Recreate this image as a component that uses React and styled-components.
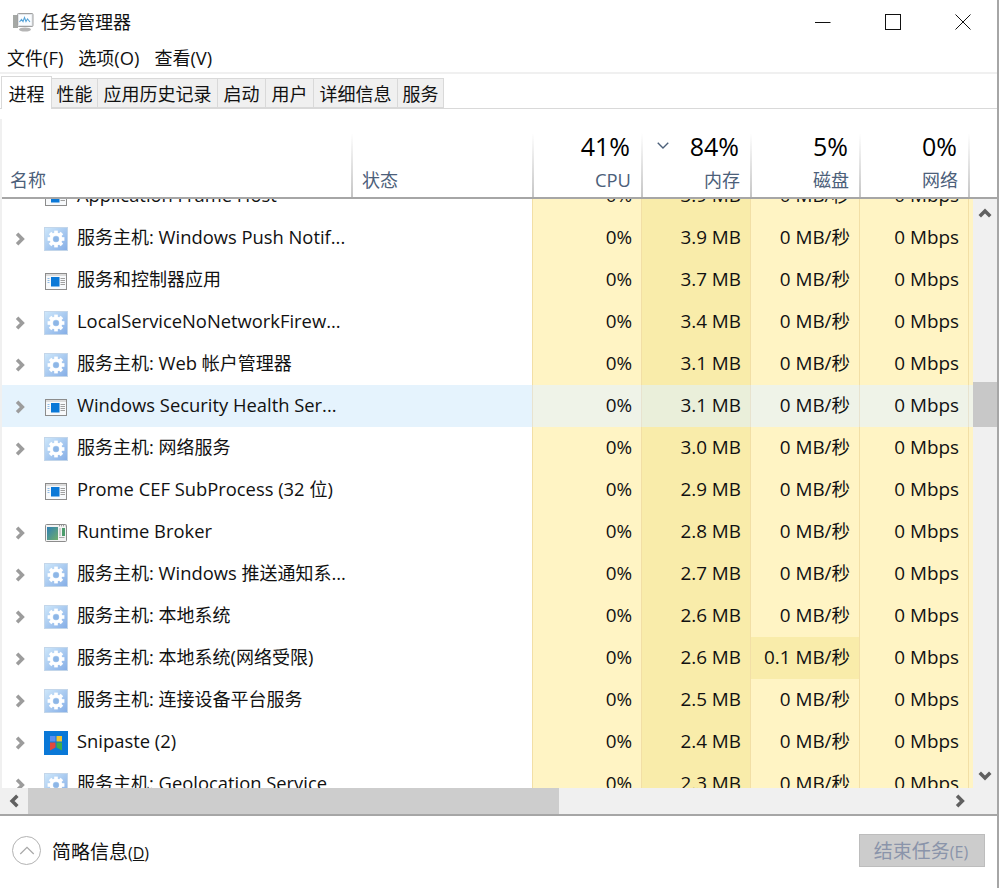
import React from "react";
import styled, { createGlobalStyle } from "styled-components";

const GlobalStyle = createGlobalStyle`
  html, body {
    margin: 0;
    padding: 0;
    background: #fff;
  }
  body {
    font-family: "Open Sans", "Noto Sans CJK SC", sans-serif;
    font-size: 18px;
    line-height: 24px;
    color: #1a1a1a;
  }
  * {
    box-sizing: border-box;
  }
`;

const rows = [
  { name: "Application Frame Host", icon: "app", mem: "3.9 MB" },
  { name: "服务主机: Windows Push Notif...", icon: "gear", open: true, mem: "3.9 MB" },
  { name: "服务和控制器应用", icon: "app", mem: "3.7 MB" },
  { name: "LocalServiceNoNetworkFirew...", icon: "gear", open: true, mem: "3.4 MB" },
  { name: "服务主机: Web 帐户管理器", icon: "gear", open: true, mem: "3.1 MB" },
  { name: "Windows Security Health Ser...", icon: "app", open: true, mem: "3.1 MB", hover: true },
  { name: "服务主机: 网络服务", icon: "gear", open: true, mem: "3.0 MB" },
  { name: "Prome CEF SubProcess (32 位)", icon: "app", mem: "2.9 MB" },
  { name: "Runtime Broker", icon: "broker", open: true, mem: "2.8 MB" },
  { name: "服务主机: Windows 推送通知系...", icon: "gear", open: true, mem: "2.7 MB" },
  { name: "服务主机: 本地系统", icon: "gear", open: true, mem: "2.6 MB" },
  { name: "服务主机: 本地系统(网络受限)", icon: "gear", open: true, mem: "2.6 MB", disk: "0.1 MB/秒" },
  { name: "服务主机: 连接设备平台服务", icon: "gear", open: true, mem: "2.5 MB" },
  { name: "Snipaste (2)", icon: "snipaste", open: true, mem: "2.4 MB" },
  { name: "服务主机: Geolocation Service", icon: "gear", open: true, mem: "2.3 MB" },
];

const tabs = ["进程", "性能", "应用历史记录", "启动", "用户", "详细信息", "服务"];
const tabWidths = [51, 46, 120, 48, 48, 84, 46];

const columns = "351px 179px 109px 109px 109px 109px 5px";

function GearIcon() {
  const teeth = [0, 45, 90, 135, 180, 225, 270, 315];
  return (
    <svg width="24" height="24" viewBox="0 0 24 24">
      <defs>
        <linearGradient id="gearBg" x1="0" y1="0" x2="1" y2="1">
          <stop offset="0" stopColor="#cfe8fb" />
          <stop offset="1" stopColor="#84ade6" />
        </linearGradient>
      </defs>
      <rect x="0.5" y="0.5" width="23" height="23" fill="url(#gearBg)" stroke="#c3d6ea" />
      {teeth.map((a) => (
        <rect key={a} x="10.2" y="3.6" width="3.6" height="4.4" fill="#fff" transform={`rotate(${a} 12 12)`} />
      ))}
      <circle cx="12" cy="12" r="4.8" fill="none" stroke="#fff" strokeWidth="3.2" />
      <circle cx="12" cy="12" r="2.6" fill="#8db6e6" />
    </svg>
  );
}

function AppIcon() {
  return (
    <svg width="24" height="24" viewBox="0 0 24 24">
      <rect x="1.5" y="4.5" width="21" height="16" fill="#f7f9fb" stroke="#8c8c8c" />
      <rect x="2" y="5" width="20" height="2" fill="#dcdcdc" />
      <rect x="7" y="8" width="8.500" height="9.500" fill="#0a78d7" />
      <path d="M3.500 9.500h2M3.500 11.500h2M3.500 13.500h2" stroke="#8fbce6" />
      <path d="M16.500 9.500h4.500M16.500 11.500h4.500M16.500 13.500h4.500M16.500 15.500h4.500" stroke="#a0a0a0" />
    </svg>
  );
}

function BrokerIcon() {
  return (
    <svg width="24" height="24" viewBox="0 0 24 24">
      <defs>
        <linearGradient id="brokerBg" x1="0" y1="0" x2="1" y2="1">
          <stop offset="0" stopColor="#2f7fb5" />
          <stop offset="1" stopColor="#6fae6a" />
        </linearGradient>
      </defs>
      <rect x="1.5" y="3.5" width="21" height="17" rx="1" fill="#f3f3f3" stroke="#8c8c8c" />
      <rect x="3" y="6" width="11" height="13" fill="url(#brokerBg)" />
      <rect x="18" y="7" width="3" height="8" fill="#4c9c6c" />
      <path d="M15 8h2M15 10h2M15 12h2M15 14h2M15 16.500h5.500" stroke="#a8a8a8" />
      <path d="M15 4.800h1M17 4.800h1M19 4.800h1M21 4.800h0.500" stroke="#777" />
    </svg>
  );
}

function SnipasteIcon() {
  return (
    <svg width="24" height="24" viewBox="0 0 24 24">
      <rect width="24" height="24" fill="#0a78d7" />
      <rect x="6" y="5" width="5.500" height="5.500" fill="#5b8ff2" />
      <rect x="12.500" y="5" width="5.500" height="5.500" fill="#f4c430" />
      <path d="M6 11.500h5.500v5L6 19.500z" fill="#e2483d" />
      <path d="M12.500 11.500H18v8l-5.500-3z" fill="#3fae49" />
    </svg>
  );
}

const rowIcons = {
  gear: GearIcon,
  app: AppIcon,
  broker: BrokerIcon,
  snipaste: SnipasteIcon,
};

function Chevron({ dir = "right", size = 14, color = "#9c9c9c", width = 3 }) {
  const paths = {
    right: "M3.500 1.500 L8 6 L3.500 10.500",
    left: "M8 1.500 L3.500 6 L8 10.500",
    up: "M1.500 8 L6 3.500 L10.500 8",
    down: "M1.500 4 L6 8.500 L10.500 4",
  };
  return (
    <svg width={size} height={size} viewBox="0 0 12 12">
      <path d={paths[dir]} fill="none" stroke={color} strokeWidth={width} />
    </svg>
  );
}

// the reference's Latin glyphs run a little wider than Open Sans next to 18px CJK
const Latin = styled.span`
  font-size: 1.02em;
`;

function Mixed({ text }) {
  return text
    .split(/([\x00-\x7f]+)/)
    .map((part, i) => (/^[\x00-\x7f]+$/.test(part) ? <Latin key={i}>{part}</Latin> : part));
}

const Window = styled.div`
  width: 999px;
  height: 888px;
  display: flex;
  flex-direction: column;
  background: #fff;
  border-right: 2px solid #a6a6a6;
  overflow: hidden;
`;

const TitleBar = styled.div`
  height: 44px;
  flex: none;
  display: flex;
  align-items: center;
  padding-left: 12px;
`;

const AppTitle = styled.span`
  margin-left: 7px;
  padding-bottom: 1px;
  color: #111;
`;

const WindowControls = styled.div`
  margin-left: auto;
  display: flex;
  align-items: center;
  gap: 54px;
  padding-right: 26px;
`;

const MenuBar = styled.div`
  height: 30px;
  flex: none;
  display: flex;
  align-items: center;
  gap: 15px;
  padding-left: 7px;
  border-bottom: 2px solid #f0f0f0;
`;

const MenuItem = styled.span`
  color: #111;
`;

const TabStrip = styled.div`
  height: 35px;
  flex: none;
  display: flex;
  align-items: flex-end;
  padding-left: 1px;
  border-bottom: 1px solid #d9d9d9;
`;

const Tab = styled.div`
  width: ${(p) => p.$width}px;
  height: ${(p) => (p.$active ? 33 : 30)}px;
  margin-bottom: ${(p) => (p.$active ? -1 : 0)}px;
  padding-top: 2px;
  background: ${(p) => (p.$active ? "#fff" : "#f0f0f0")};
  border: 1px solid #d9d9d9;
  border-bottom: ${(p) => (p.$active ? "none" : "1px solid #d9d9d9")};
  border-left: ${(p) => (p.$active ? "1px solid #d9d9d9" : "none")};
  display: flex;
  align-items: center;
  justify-content: center;
  white-space: nowrap;
  color: #111;
`;

const Panel = styled.div`
  flex: 1;
  min-height: 0;
  margin-top: 10px;
  padding-left: 2px;
  background: #f0f0f0;
  display: flex;
  flex-direction: column;
`;

const Header = styled.div`
  height: 80px;
  flex: none;
  display: grid;
  grid-template-columns: ${columns};
  background: #fff;
  border-bottom: 2px solid #a6a6a6;
  padding-right: 24px;
`;

const HeaderCell = styled.div`
  display: flex;
  flex-direction: column;
  justify-content: flex-end;
  align-items: ${(p) => (p.$metric ? "stretch" : "flex-start")};
  text-align: ${(p) => (p.$metric ? "right" : "left")};
  padding: ${(p) => (p.$metric ? "0 10px 5px 0" : p.$right ? "0 9px 5px 8px" : "0 9px 5px 9px")};
  border-style: solid;
  border-width: ${(p) => (p.$right ? "0 2px 0 0" : p.$left ? "0 0 0 2px" : "0")};
  border-image: linear-gradient(#fff 19%, #c4c4c4) 1;
`;

const Percent = styled.div`
  font-size: 25px;
  line-height: 36px;
  margin: 0 1px 4px 0;
  color: #000;
  display: flex;
  justify-content: space-between;
  align-items: flex-start;
  padding-left: 13px;
`;

const SortMark = styled.span`
  display: flex;
  height: 16px;
  margin-top: 10px;
`;

const ColumnLabel = styled.div`
  color: #4c607a;
  white-space: nowrap;
`;

const TableRow = styled.div`
  flex: 1;
  min-height: 0;
  display: flex;
`;

const ListViewport = styled.div`
  width: 971px;
  flex: none;
  overflow: hidden;
  background: #fff;
`;

const RowList = styled.div`
  margin-top: -24px;
`;

const Row = styled.div`
  height: 42px;
  display: grid;
  grid-template-columns: ${columns};
  background: ${(p) => (p.$hover ? "#e5f3fd" : "transparent")};
`;

const NameCell = styled.div`
  display: flex;
  align-items: center;
  padding: 0 0 2px 11px;
  min-width: 0;
  white-space: nowrap;
  color: #111;
`;

const ChevronSlot = styled.span`
  width: 14px;
  height: 14px;
  display: flex;
  flex: none;
  margin: 4px 17px 0 0;
`;

const IconSlot = styled.span`
  width: 24px;
  height: 24px;
  flex: none;
  margin: 4px 9px 0 0;
`;

const MetricCell = styled.div`
  display: flex;
  align-items: center;
  justify-content: flex-end;
  padding: 0 9px 2px 0;
  font-size: 18.5px;
  white-space: nowrap;
  color: #111;
  border-left: 1px solid ${(p) => (p.$hover ? "#e8e3cf" : "#f2dfa6")};
  background: ${(p) => {
    if (p.$hover) return p.$strong ? "#eaefda" : "#eff3e8";
    return p.$strong ? "#f9ecaa" : "#fff4c4";
  }};
`;

const VScrollbar = styled.div`
  width: 24px;
  flex: none;
  display: flex;
  flex-direction: column;
  align-items: center;
  background: #f0f0f0;
`;

const ScrollButton = styled.div`
  height: ${(p) => p.$size}px;
  flex: none;
  display: flex;
  align-items: center;
  justify-content: center;
`;

const VTrack = styled.div`
  flex: 1;
  width: 100%;
  padding-top: 153px;
`;

const VThumb = styled.div`
  height: 45px;
  background: #c8c8c8;
`;

const HScrollbar = styled.div`
  height: 26px;
  flex: none;
  display: flex;
  margin-right: 24px;
  background: #f0f0f0;
`;

const HButton = styled.div`
  width: 26px;
  flex: none;
  display: flex;
  align-items: center;
  justify-content: center;
`;

const HTrack = styled.div`
  flex: 1;
`;

const HThumb = styled.div`
  width: 531px;
  height: 100%;
  background: #cdcdcd;
`;

const Footer = styled.div`
  height: 74px;
  flex: none;
  display: flex;
  align-items: center;
  padding: 0 12px 3px 12px;
  background: #fff;
  border-top: 2px solid #a6a6a6;
  font-size: 19px;
`;

const Collapse = styled.div`
  width: 29px;
  height: 29px;
  border: 1px solid #b3b3b3;
  border-radius: 50%;
  display: flex;
  align-items: center;
  justify-content: center;
`;

const CollapseLabel = styled.span`
  margin-left: 11px;
  padding-top: 3px;
  color: #111;
`;

const Accel = styled.span`
  font-size: 16px;
`;

const EndTask = styled.button`
  margin-left: auto;
  width: 126px;
  height: 33px;
  padding: 2px 2px 0 0;
  font: inherit;
  color: #8a94aa;
  background: #cccccc;
  border: 1px solid #bdbdbd;
`;

export default function App() {
  return (
    <>
      <GlobalStyle />
      <Window>
        <TitleBar>
          <svg width="22" height="22" viewBox="0 0 22 22">
            <rect x="1" y="4" width="5" height="13" fill="#a5a8a5" />
            <rect x="5.500" y="2.500" width="15.500" height="13" rx="1" fill="#e2e6ea" stroke="#a0a0a0" />
            <rect x="7" y="4" width="12.500" height="10" fill="#fbfdff" />
            <path d="M7.500 11l2-2.500 1.500 2 1.500-4 1.500 4 1.500-2.500 2.500 3" fill="none" stroke="#58a4d8" strokeWidth="1.100" />
            <ellipse cx="13" cy="18.500" rx="6" ry="2" fill="#b5b5b5" />
          </svg>
          <AppTitle>任务管理器</AppTitle>
          <WindowControls>
            <svg width="16" height="16" viewBox="0 0 16 16">
              <path d="M0 8.500h15.500" stroke="#111" />
            </svg>
            <svg width="16" height="16" viewBox="0 0 16 16">
              <rect x="0.500" y="0.500" width="15" height="15" fill="none" stroke="#111" />
            </svg>
            <svg width="16" height="16" viewBox="0 0 16 16">
              <path d="M0.500 0.500l15 15M15.500 0.500l-15 15" stroke="#111" />
            </svg>
          </WindowControls>
        </TitleBar>
        <MenuBar>
          <MenuItem><Mixed text="文件(F)" /></MenuItem>
          <MenuItem><Mixed text="选项(O)" /></MenuItem>
          <MenuItem><Mixed text="查看(V)" /></MenuItem>
        </MenuBar>
        <TabStrip>
          {tabs.map((t, i) => (
            <Tab key={t} $active={i === 0} $width={tabWidths[i]}>
              {t}
            </Tab>
          ))}
        </TabStrip>
        <Panel>
          <Header>
            <HeaderCell $right>
              <ColumnLabel>名称</ColumnLabel>
            </HeaderCell>
            <HeaderCell>
              <ColumnLabel>状态</ColumnLabel>
            </HeaderCell>
            <HeaderCell $metric $left>
              <Percent>
                <span />
                41%
              </Percent>
              <ColumnLabel><Mixed text="CPU" /></ColumnLabel>
            </HeaderCell>
            <HeaderCell $metric $left>
              <Percent>
                <SortMark>
                  <Chevron dir="down" size={14} color="#4c607a" width={1.2} />
                </SortMark>
                84%
              </Percent>
              <ColumnLabel>内存</ColumnLabel>
            </HeaderCell>
            <HeaderCell $metric $left>
              <Percent>
                <span />
                5%
              </Percent>
              <ColumnLabel>磁盘</ColumnLabel>
            </HeaderCell>
            <HeaderCell $metric $left>
              <Percent>
                <span />
                0%
              </Percent>
              <ColumnLabel>网络</ColumnLabel>
            </HeaderCell>
            <HeaderCell $left />
          </Header>
          <TableRow>
            <ListViewport>
              <RowList>
                {rows.map((r) => {
                  const Icon = rowIcons[r.icon];
                  return (
                    <Row key={r.name} $hover={r.hover}>
                      <NameCell>
                        <ChevronSlot>{r.open && <Chevron />}</ChevronSlot>
                        <IconSlot>
                          <Icon />
                        </IconSlot>
                        <span><Mixed text={r.name} /></span>
                      </NameCell>
                      <div />
                      <MetricCell $hover={r.hover}><Mixed text="0%" /></MetricCell>
                      <MetricCell $hover={r.hover} $strong>
                        <span><Mixed text={r.mem} /></span>
                      </MetricCell>
                      <MetricCell $hover={r.hover} $strong={!!r.disk}>
                        <span><Mixed text={r.disk || "0 MB/秒"} /></span>
                      </MetricCell>
                      <MetricCell $hover={r.hover}><Mixed text="0 Mbps" /></MetricCell>
                      <MetricCell $hover={r.hover} />
                    </Row>
                  );
                })}
              </RowList>
            </ListViewport>
            <VScrollbar>
              <ScrollButton $size={30}>
                <Chevron dir="up" color="#606060" />
              </ScrollButton>
              <VTrack>
                <VThumb />
              </VTrack>
              <ScrollButton $size={26}>
                <Chevron dir="down" color="#606060" />
              </ScrollButton>
            </VScrollbar>
          </TableRow>
          <HScrollbar>
            <HButton>
              <Chevron dir="left" color="#606060" />
            </HButton>
            <HTrack>
              <HThumb />
            </HTrack>
            <HButton>
              <Chevron dir="right" color="#606060" />
            </HButton>
          </HScrollbar>
        </Panel>
        <Footer>
          <Collapse>
            <Chevron dir="up" size={18} color="#a8a8a8" width={0.8} />
          </Collapse>
          <CollapseLabel>
            简略信息<Accel>(<u>D</u>)</Accel>
          </CollapseLabel>
          <EndTask>
            结束任务<Accel>(E)</Accel>
          </EndTask>
        </Footer>
      </Window>
    </>
  );
}
